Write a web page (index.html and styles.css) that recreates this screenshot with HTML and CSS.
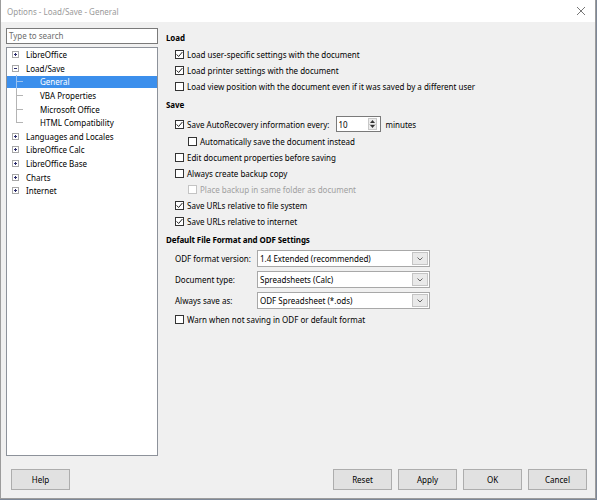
FILE: index.html
```html
<!DOCTYPE html>
<html lang="en">
<head>
<meta charset="UTF-8">
<title>Options - Load/Save - General</title>
<link rel="stylesheet" href="styles.css">
</head>
<body>
<div class="window">
    <div class="titlebar">
        <span class="title">Options - Load/Save - General</span>
        <svg class="close" width="8" height="8" viewBox="0 0 8 8">
            <path d="M0 0L8 8M8 0L0 8" stroke="#777" stroke-width="1" fill="none"/>
        </svg>
    </div>

    <div class="dialog">
        <div class="main">
            <div class="sidebar">
                <div class="search">Type to search</div>
                <div class="tree">
                    <div class="node"><svg class="expander" width="7" height="7" viewBox="0 0 7 7"><rect x="0.5" y="0.5" width="6" height="6" fill="#fff" stroke="#a8a8a8"/><path d="M2 3.5H5M3.5 2V5" stroke="#2b2b6b"/></svg>LibreOffice</div>
                    <div class="node"><svg class="expander" width="7" height="7" viewBox="0 0 7 7"><rect x="0.5" y="0.5" width="6" height="6" fill="#fff" stroke="#a8a8a8"/><path d="M2 3.5H5" stroke="#2b2b6b"/></svg>Load/Save</div>
                    <div class="node child selected"><span class="branch"></span>General</div>
                    <div class="node child"><span class="branch"></span>VBA Properties</div>
                    <div class="node child"><span class="branch"></span>Microsoft Office</div>
                    <div class="node child"><span class="branch last"></span>HTML Compatibility</div>
                    <div class="node"><svg class="expander" width="7" height="7" viewBox="0 0 7 7"><rect x="0.5" y="0.5" width="6" height="6" fill="#fff" stroke="#a8a8a8"/><path d="M2 3.5H5M3.5 2V5" stroke="#2b2b6b"/></svg>Languages and Locales</div>
                    <div class="node"><svg class="expander" width="7" height="7" viewBox="0 0 7 7"><rect x="0.5" y="0.5" width="6" height="6" fill="#fff" stroke="#a8a8a8"/><path d="M2 3.5H5M3.5 2V5" stroke="#2b2b6b"/></svg>LibreOffice Calc</div>
                    <div class="node"><svg class="expander" width="7" height="7" viewBox="0 0 7 7"><rect x="0.5" y="0.5" width="6" height="6" fill="#fff" stroke="#a8a8a8"/><path d="M2 3.5H5M3.5 2V5" stroke="#2b2b6b"/></svg>LibreOffice Base</div>
                    <div class="node"><svg class="expander" width="7" height="7" viewBox="0 0 7 7"><rect x="0.5" y="0.5" width="6" height="6" fill="#fff" stroke="#a8a8a8"/><path d="M2 3.5H5M3.5 2V5" stroke="#2b2b6b"/></svg>Charts</div>
                    <div class="node"><svg class="expander" width="7" height="7" viewBox="0 0 7 7"><rect x="0.5" y="0.5" width="6" height="6" fill="#fff" stroke="#a8a8a8"/><path d="M2 3.5H5M3.5 2V5" stroke="#2b2b6b"/></svg>Internet</div>
                </div>
            </div>

            <div class="page">
                <div class="group">
                    <div class="group-title">Load</div>
                    <div class="group-body">
                        <div class="option"><span class="cb on"><svg width="7" height="7" viewBox="0 0 7 7"><path d="M0.6 3.4L2.6 5.5L6.4 1" stroke="#222" fill="none"/></svg></span>Load user-specific settings with the document</div>
                        <div class="option"><span class="cb on"><svg width="7" height="7" viewBox="0 0 7 7"><path d="M0.6 3.4L2.6 5.5L6.4 1" stroke="#222" fill="none"/></svg></span>Load printer settings with the document</div>
                        <div class="option"><span class="cb"></span>Load view position with the document even if it was saved by a different user</div>
                    </div>
                </div>

                <div class="group">
                    <div class="group-title">Save</div>
                    <div class="group-body">
                        <div class="option spin-row">
                            <span class="cb on"><svg width="7" height="7" viewBox="0 0 7 7"><path d="M0.6 3.4L2.6 5.5L6.4 1" stroke="#222" fill="none"/></svg></span>Save AutoRecovery information every:
                            <div class="spin">
                                <span class="spin-value">10</span>
                                <div class="spin-buttons">
                                    <span class="spin-btn"><svg width="5" height="3" viewBox="0 0 5 3"><path d="M0 3L2.5 0L5 3Z" fill="#333"/></svg></span>
                                    <span class="spin-btn"><svg width="5" height="3" viewBox="0 0 5 3"><path d="M0 0L2.5 3L5 0Z" fill="#333"/></svg></span>
                                </div>
                            </div>
                            <span class="unit">minutes</span>
                        </div>
                        <div class="option sub"><span class="cb"></span>Automatically save the document instead</div>
                        <div class="option"><span class="cb"></span>Edit document properties before saving</div>
                        <div class="option"><span class="cb"></span>Always create backup copy</div>
                        <div class="option sub disabled"><span class="cb"></span>Place backup in same folder as document</div>
                        <div class="option"><span class="cb on"><svg width="7" height="7" viewBox="0 0 7 7"><path d="M0.6 3.4L2.6 5.5L6.4 1" stroke="#222" fill="none"/></svg></span>Save URLs relative to file system</div>
                        <div class="option"><span class="cb on"><svg width="7" height="7" viewBox="0 0 7 7"><path d="M0.6 3.4L2.6 5.5L6.4 1" stroke="#222" fill="none"/></svg></span>Save URLs relative to internet</div>
                    </div>
                </div>

                <div class="group">
                    <div class="group-title">Default File Format and ODF Settings</div>
                    <div class="group-body">
                        <div class="fields">
                            <label>ODF format version:</label>
                            <div class="combo"><span class="combo-value">1.4 Extended (recommended)</span><span class="combo-btn"><svg width="6" height="4" viewBox="0 0 6 4"><path d="M0.5 0.5L3 3L5.5 0.5" stroke="#666" fill="none"/></svg></span></div>
                            <label>Document type:</label>
                            <div class="combo"><span class="combo-value">Spreadsheets (Calc)</span><span class="combo-btn"><svg width="6" height="4" viewBox="0 0 6 4"><path d="M0.5 0.5L3 3L5.5 0.5" stroke="#666" fill="none"/></svg></span></div>
                            <label>Always save as:</label>
                            <div class="combo"><span class="combo-value">ODF Spreadsheet (*.ods)</span><span class="combo-btn"><svg width="6" height="4" viewBox="0 0 6 4"><path d="M0.5 0.5L3 3L5.5 0.5" stroke="#666" fill="none"/></svg></span></div>
                        </div>
                        <div class="option warn"><span class="cb"></span>Warn when not saving in ODF or default format</div>
                    </div>
                </div>
            </div>
        </div>

        <div class="buttons">
            <button class="btn">Help</button>
            <div class="actions">
                <button class="btn">Reset</button>
                <button class="btn">Apply</button>
                <button class="btn">OK</button>
                <button class="btn">Cancel</button>
            </div>
        </div>
    </div>
</div>
</body>
</html>
```

FILE: styles.css
```css
:root {
    --dialog-bg: #f0f0f0;
    --border: #a0a0a0;
    --text: #000;
    --text-muted: #6d6d6d;
    --text-disabled: #a0a0a0;
    --highlight: #3c8fec;
}

body {
    margin: 0;
    background-color: #7d8797;
    font-family: "Noto Sans", sans-serif;
    font-size: 8px;
    color: var(--text);
}

.window {
    width: 596px;
    height: 499px;
    box-sizing: border-box;
    border: 1px solid #9c9c9c;
    border-top: none;
    background-color: var(--dialog-bg);
    display: flex;
    flex-direction: column;
}

.titlebar {
    height: 22px;
    flex-shrink: 0;
    background-color: #fff;
    display: flex;
    align-items: center;
    padding: 0 6px 0 6px;
}

.title {
    color: #9a9a9a;
    font-size: 8px;
    flex: 1;
    padding-top: 1px;
}

.close {
    margin-right: 4px;
}

.dialog {
    flex: 1;
    display: flex;
    flex-direction: column;
    padding: 6px 8px 8px 5px;
    min-height: 0;
}

.main {
    flex: 1;
    display: flex;
    min-height: 0;
}

/* left tree */

.sidebar {
    width: 152px;
    flex-shrink: 0;
    display: flex;
    flex-direction: column;
    gap: 3px;
}

.search {
    height: 16px;
    box-sizing: border-box;
    border: 1px solid #7a7a7a;
    background-color: #fff;
    color: var(--text-muted);
    padding-left: 2px;
    line-height: 14px;
}

.tree {
    flex: 1;
    border: 1px solid #8d929a;
    background-color: #fff;
}

.node {
    height: 13.6px;
    box-sizing: border-box;
    padding: 1px 0;
    display: flex;
    align-items: center;
    white-space: nowrap;
    background-clip: content-box;
}

.expander {
    margin: 0 7px 0 5px;
    flex-shrink: 0;
}

.node.selected {
    background-color: var(--highlight);
    color: #fff;
}

.branch {
    align-self: stretch;
    width: 7px;
    margin: -1px 17px -1px 9px;
    background:
        linear-gradient(#b4b4b4, #b4b4b4) 0 0 / 1px 100% no-repeat,
        linear-gradient(#b4b4b4, #b4b4b4) 0 50% / 7px 1px no-repeat;
}

.branch.last {
    background:
        linear-gradient(#b4b4b4, #b4b4b4) 0 0 / 1px 50% no-repeat,
        linear-gradient(#b4b4b4, #b4b4b4) 0 50% / 7px 1px no-repeat;
}

.node.selected .branch {
    background:
        linear-gradient(#9cc3f0, #9cc3f0) 0 0 / 1px 100% no-repeat,
        linear-gradient(#9cc3f0, #9cc3f0) 0 50% / 7px 1px no-repeat;
}

/* right page */

.page {
    flex: 1;
    padding: 2px 0 0 8px;
}

.group + .group {
    margin-top: 3px;
}

.group-title {
    font-weight: bold;
    height: 16px;
    line-height: 16px;
    letter-spacing: -0.1px;
}

.group-body {
    padding-left: 9px;
}

.option {
    height: 16px;
    display: flex;
    align-items: center;
    gap: 3px;
    white-space: nowrap;
}

.option.sub {
    padding-left: 13px;
}

.option.disabled {
    color: var(--text-disabled);
}

.cb {
    width: 9px;
    height: 9px;
    box-sizing: border-box;
    border: 1px solid #333;
    background-color: #fff;
    flex-shrink: 0;
    display: flex;
    align-items: center;
    justify-content: center;
}

.option.disabled .cb {
    border-color: #c4c4c4;
}

.spin-row {
    height: 18px;
    margin-top: 2px;
}

.spin {
    width: 45px;
    height: 16px;
    box-sizing: border-box;
    border: 1px solid #7a7a7a;
    background-color: #fff;
    display: flex;
    align-items: center;
    margin-left: 3px;
    padding: 1px 2px 1px 2px;
}

.spin-value {
    flex: 1;
}

.spin-buttons {
    width: 9px;
    align-self: stretch;
    display: flex;
    flex-direction: column;
    margin-right: 1px;
}

.spin-btn {
    flex: 1;
    border: 1px solid #c8c8c8;
    background-color: #ececec;
    display: flex;
    align-items: center;
    justify-content: center;
}

.spin-btn + .spin-btn {
    border-top: none;
}

.unit {
    margin-left: 2px;
}

.fields {
    display: grid;
    grid-template-columns: 82px 173px;
    row-gap: 4px;
    margin-top: 2px;
    align-items: center;
}

.combo {
    height: 17px;
    box-sizing: border-box;
    border: 1px solid #a8a8a8;
    background-color: #fff;
    display: flex;
    align-items: center;
}

.combo-value {
    flex: 1;
    padding-left: 2px;
}

.combo-btn {
    width: 14px;
    align-self: stretch;
    margin: 1px;
    border: 1px solid #c4c4c4;
    background-color: #e9e9e9;
    display: flex;
    align-items: center;
    justify-content: center;
}

.option.warn {
    margin-top: 2px;
}

/* bottom buttons */

.buttons {
    display: flex;
    margin-top: 13px;
    padding-left: 5px;
}

.actions {
    margin-left: auto;
    display: flex;
    gap: 6px;
}

.btn {
    width: 59px;
    height: 21px;
    border: 1px solid #adadad;
    background-color: #e1e1e1;
    font-family: "Noto Sans", sans-serif;
    font-size: 8px;
    color: #000;
    padding: 0;
}
```
